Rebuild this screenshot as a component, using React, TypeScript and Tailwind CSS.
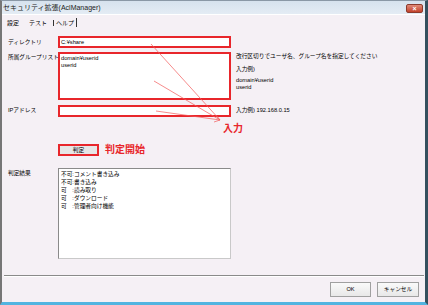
import React from "react";

const jp = { fontFamily: '"Liberation Sans", "Noto Sans CJK JP", sans-serif' };

export default function App() {
  return (
    <div
      className="relative w-[428px] h-[305px] bg-[#f5f0f5] flex flex-col border-l-2 border-l-[#767676] border-r-[3px] border-r-[#34505e] border-b-[3px] border-b-[#52b4e0] border-t border-t-[#8a98a6] overflow-hidden text-black"
      style={jp}
    >
      {/* title bar */}
      <div className="h-[13px] flex items-center justify-between pl-[1px] pr-[2px] bg-gradient-to-b from-[#d6e2ee] to-[#e4ecf4]">
        <span className="text-[7px] leading-none text-[#1a1a1a]">セキュリティ拡張(AclManager)</span>
        <div className="w-[17px] h-[9px] mt-[2px] rounded-[2px] bg-gradient-to-b from-[#e08a78] to-[#c2402a] border border-[#8c3a2c] flex items-center justify-center">
          <span className="text-[7px] leading-none font-bold text-white">×</span>
        </div>
      </div>
      {/* tabs */}
      <div className="h-[15px] flex items-end pl-[3px] bg-[#f5f0f5] border-t border-t-[#ffffff]">
        <div className="flex items-center h-[13px] text-[6px] leading-none">
          <span className="px-[2px]">設定</span>
          <span className="ml-[6px] px-[2px]">テスト</span>
          <span className="ml-[4px] pl-[2px] pr-[2px] border-l border-l-[#333]">ヘルプ</span>
          <span className="h-[9px] border-l border-l-[#333]" />
        </div>
      </div>
      {/* content */}
      <div className="flex-1 flex flex-col pl-[6px] pt-[7px] text-[5.7px] leading-[7px]">
        <div className="grid grid-cols-[45px_173px_1fr] gap-x-[5px] items-start">
          {/* directory */}
          <div className="pt-[3px] whitespace-nowrap">ディレクトリ</div>
          <div className="h-[12px] border-2 border-[#e8262b] bg-white px-[1px] flex items-center">C:¥share</div>
          <div />
          {/* group list */}
          <div className="mt-[4px] pt-[2px] whitespace-nowrap">所属グループリスト</div>
          <div className="mt-[4px] h-[48px] border-2 border-[#e8262b] bg-white px-[1px] pt-[1px]">
            <div>domain¥userid</div>
            <div>userid</div>
          </div>
          <div className="mt-[4px] pt-[1px] whitespace-nowrap">
            <div>改行区切りでユーザ名、グループ名を指定してください</div>
            <div className="mt-[6px]">入力例)</div>
            <div className="mt-[4px]">domain¥userid</div>
            <div>userid</div>
          </div>
          {/* ip */}
          <div className="mt-[5px] pt-[2px] whitespace-nowrap">IPアドレス</div>
          <div className="mt-[5px] h-[12px] border-2 border-[#e8262b] bg-white" />
          <div className="mt-[5px] pt-[2px] whitespace-nowrap">入力例) 192.168.0.15</div>
          {/* judge button */}
          <div className="mt-[27px]" />
          <div className="mt-[27px] flex items-center gap-[6px]">
            <div className="w-[41px] h-[12px] border-2 border-[#e8262b] bg-[#e6e6e6] flex items-center justify-center">判定</div>
            <span className="text-[10px] leading-none font-bold text-[#e8262b]">判定開始</span>
          </div>
          <div className="mt-[27px]" />
          {/* result */}
          <div className="mt-[12px] pt-[2px] whitespace-nowrap">判定結果</div>
          <div className="mt-[12px] h-[91px] bg-white border border-[#c9c9c9] border-t-[#8a8a8a] border-l-[#8a8a8a] px-[2px] pt-[1px] leading-[8px]">
            <div>不可:コメント書き込み</div>
            <div>不可:書き込み</div>
            <div>可　:読み取り</div>
            <div>可　:ダウンロード</div>
            <div>可　:管理者向け機能</div>
          </div>
          <div />
        </div>
        <div className="flex-1" />
        <div className="mr-[1px] -ml-[4px] border-t border-t-[#8a8a8a] border-b border-b-[#ffffff]" />
        <div className="flex justify-end gap-[6px] pr-[6px] mt-[5px] mb-[5px]">
          <div className="w-[41px] h-[15px] border border-[#a0a0a0] bg-gradient-to-b from-[#fafafa] to-[#e8e8e8] flex items-center justify-center">OK</div>
          <div className="w-[42px] h-[15px] border border-[#a0a0a0] bg-gradient-to-b from-[#fafafa] to-[#e8e8e8] flex items-center justify-center">キャンセル</div>
        </div>
      </div>
      {/* annotation overlay */}
      <svg className="absolute left-0 top-0 pointer-events-none" width="428" height="305">
        <g stroke="#f25a5a" strokeWidth="0.7" fill="none">
          <line x1="149" y1="43" x2="218" y2="119" />
          <line x1="152" y1="80" x2="218" y2="119" />
          <line x1="154" y1="110" x2="218" y2="119" />
          <line x1="212" y1="121" x2="218" y2="119" />
          <line x1="214" y1="114" x2="218" y2="119" />
        </g>
      </svg>
      <span className="absolute left-[221px] top-[123px] text-[10px] leading-none font-bold text-[#e8262b]">入力</span>
    </div>
  );
}
